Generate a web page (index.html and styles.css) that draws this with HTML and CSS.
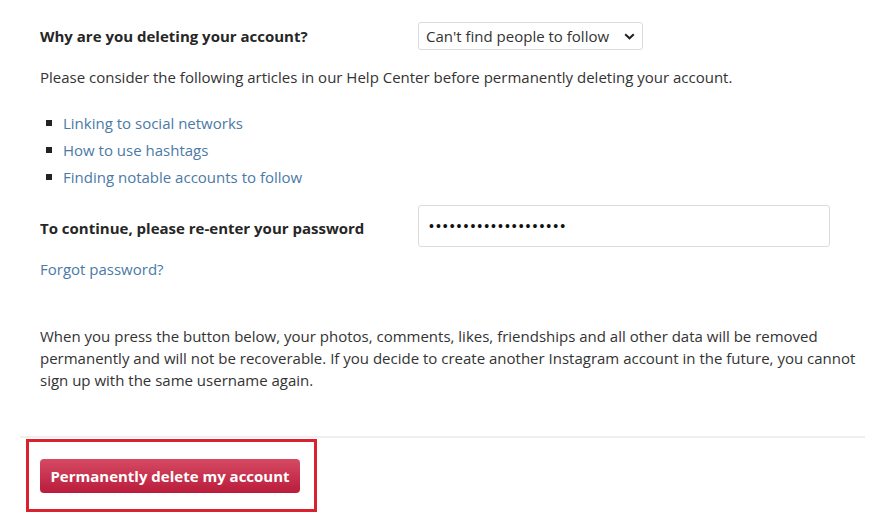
FILE: index.html
```html
<!DOCTYPE html>
<html lang="en">
<head>
    <meta charset="UTF-8">
    <title>Delete Your Account</title>
    <link rel="stylesheet" href="styles.css">
</head>
<body>
    <div class="page">
        <div class="row row-reason">
            <label class="field-label" for="reason">Why are you deleting your account?</label>
            <div class="select-wrap">
                <select id="reason" class="reason-select">
                    <option>Can't find people to follow</option>
                </select>
                <svg class="chevron" width="11" height="7" viewBox="0 0 11 7"><path d="M1.2 1.2 L5.5 5.3 L9.8 1.2" fill="none" stroke="#222" stroke-width="2"/></svg>
            </div>
        </div>

        <p class="intro">Please consider the following articles in our Help Center before permanently deleting your account.</p>

        <ul class="help-links">
            <li><a href="#">Linking to social networks</a></li>
            <li><a href="#">How to use hashtags</a></li>
            <li><a href="#">Finding notable accounts to follow</a></li>
        </ul>

        <div class="row row-password">
            <label class="field-label" for="password">To continue, please re-enter your password</label>
            <input type="password" id="password" class="password-input" value="xxxxxxxxxxxxxxxxxxxx">
        </div>

        <a href="#" class="forgot">Forgot password?</a>

        <p class="warning">When you press the button below, your photos, comments, likes, friendships and all other data will be removed permanently and will not be recoverable. If you decide to create another Instagram account in the future, you cannot sign up with the same username again.</p>

        <div class="footer">
            <div class="highlight">
                <button class="delete-btn" type="button">Permanently delete my account</button>
            </div>
        </div>
    </div>
</body>
</html>
```

FILE: styles.css
```css
body {
    margin: 0;
    background-color: #ffffff;
    font-family: "Open Sans", "Noto Sans", sans-serif;
    color: #333;
    font-size: 15px;
}

.page {
    width: 845px;
    margin-left: 20px;
    padding-top: 22px;
}

.row {
    display: flex;
    align-items: center;
    padding-left: 20px;
}

.field-label {
    width: 378px;
    font-weight: bold;
    font-size: 15px;
    color: #262626;
}

.select-wrap {
    position: relative;
}

.reason-select {
    appearance: none;
    -webkit-appearance: none;
    width: 225px;
    height: 28px;
    padding: 0 0 0 7px;
    border: 1px solid #dbdbdb;
    border-radius: 3px;
    background: #fff;
    font-family: inherit;
    font-size: 15px;
    color: #333;
}

.chevron {
    position: absolute;
    right: 8px;
    top: 11px;
    pointer-events: none;
}

.intro {
    margin: 16px 0 0 20px;
    line-height: 22px;
}

.help-links {
    list-style: none;
    margin: 21px 0 0 20px;
    padding: 0;
}

.help-links li {
    display: flex;
    align-items: center;
    height: 27px;
}

.help-links li::before {
    content: "";
    width: 6px;
    height: 6px;
    background: #222;
    margin: 0 11px 0 6px;
}

a {
    color: #4a7aa6;
    text-decoration: none;
}

.row-password {
    margin-top: 15px;
}

.row-password .field-label {
    padding-top: 4px;
}

.password-input {
    width: 412px;
    height: 42px;
    box-sizing: border-box;
    border: 1px solid #dbdbdb;
    border-radius: 3px;
    padding: 0 10px;
    font-size: 14px;
    letter-spacing: 2px;
    color: #111;
}

.forgot {
    display: block;
    margin: 11px 0 0 20px;
    line-height: 22px;
}

.warning {
    margin: 45px 0 0 20px;
    line-height: 22px;
    padding-right: 5px;
}

.footer {
    margin-top: 45px;
    border-top: 2px solid #efefef;
    padding-top: 1px;
}

.highlight {
    display: inline-block;
    margin-left: 6px;
    border: 3px solid #d9222e;
    padding: 17px 14px 16px 11px;
}

.delete-btn {
    display: block;
    width: 260px;
    height: 34px;
    border: none;
    border-radius: 4px;
    background: linear-gradient(#d64a64, #b91c3a);
    color: #fff;
    font-family: inherit;
    font-weight: bold;
    font-size: 15px;
    cursor: pointer;
}
```
